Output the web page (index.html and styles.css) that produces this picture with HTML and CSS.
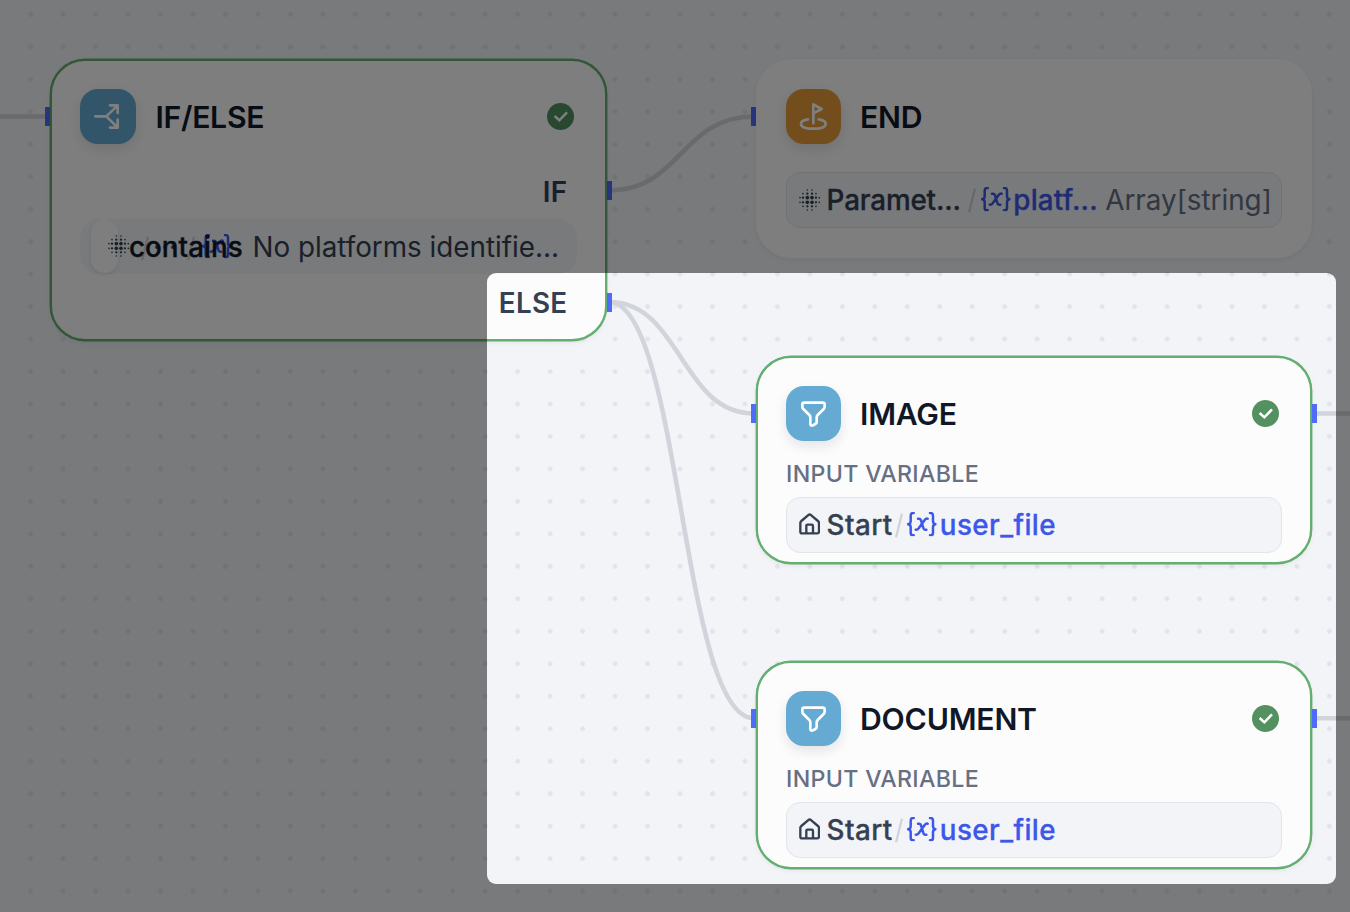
FILE: index.html
```
<!DOCTYPE html>
<html lang="en">
<head>
<meta charset="utf-8">
<title>Workflow</title>
<link rel="stylesheet" href="styles.css">
</head>
<body>
<svg class="defs" aria-hidden="true">
  <symbol id="check" viewBox="0 0 81 81"><circle cx="40.5" cy="40.5" r="40.5" fill="#539160"/><path d="M23 39 37 52 60 28" fill="none" stroke="#fff" stroke-width="7.500"/></symbol>
  <symbol id="filter" viewBox="0 0 165 165"><path d="M54 50H110q6 0 6 6v6q0 4-3 7L95 87q-3 3-3 7v14q0 4-4 6l-7 4q-8 3-8-5V95q0-5-3-8L52 69q-3-3-3-7v-6q0-6 5-6z"/></symbol>
  <symbol id="home" viewBox="0 0 64 66"><path d="M4 30q0-4 3-6L28 6q4-3 8 0L57 24q3 2 3 6V56q0 5-5 5H9q-5 0-5-5zM22 60V39q0-4 4-4H38q4 0 4 4V60"/></symbol>
  <symbol id="var" viewBox="0 0 89 73"><path d="M20 3h-2q-7 0-7 8v16q0 9-8 9.500q8 .5 8 9.500v16q0 8 7 8h2M69 3h2q7 0 7 8v16q0 9 8 9.500q-8 .5-8 9.500v16q0 8-7 8h-2M33 20h3q4 0 6 5l7 23q1 5 5 5h4M62 20q-5-1-9 4L35 49q-4 5-9 4"/></symbol>
  <symbol id="slash" viewBox="0 0 24 76"><path d="M21 2 3 74"/></symbol>
  <symbol id="dots" viewBox="0 0 64 66">
    <g><circle cx="25" cy="3" r="2.500"/><circle cx="39" cy="3" r="2.500"/>
    <circle cx="12" cy="14" r="2.500"/><circle cx="25" cy="14" r="3.500"/><circle cx="39" cy="14" r="3.500"/><circle cx="51" cy="14" r="2.500"/>
    <circle cx="3" cy="26" r="2.500"/><circle cx="12" cy="26" r="3.500"/><circle cx="25" cy="26" r="5.500"/><circle cx="39" cy="26" r="5.500"/><circle cx="51" cy="26" r="3.500"/><circle cx="61" cy="26" r="2.500"/>
    <circle cx="3" cy="40" r="2.500"/><circle cx="12" cy="40" r="3.500"/><circle cx="25" cy="40" r="5.500"/><circle cx="39" cy="40" r="5.500"/><circle cx="51" cy="40" r="3.500"/><circle cx="61" cy="40" r="2.500"/>
    <circle cx="12" cy="52" r="2.500"/><circle cx="25" cy="52" r="3.500"/><circle cx="39" cy="52" r="3.500"/><circle cx="51" cy="52" r="2.500"/>
    <circle cx="25" cy="63" r="2.500"/><circle cx="39" cy="63" r="2.500"/></g>
  </symbol>
</svg>

<main class="canvas">
  <svg class="edges" viewBox="0 0 1350 912">
    <path d="M0 116.500H48M609 190.500C681 190.500 681 116.500 754 116.500M609 302C681 302 681 413.500 754 413.500M609 302C681 302 681 718.300 754 718.300M1314 413.500H1350M1314 718.300H1350"/>
  </svg>

  <section class="node node-if done">
    <i class="port in"></i><i class="port out port-if"></i><i class="port out port-else"></i>
    <header class="head">
      <span class="tile blue"><svg viewBox="0 0 165 165"><path d="M46 82H79L113 49M79 82 113 116M90 49H113V72M90 116H113V92"/></svg></span>
      <h2>IF/ELSE</h2>
      <svg class="check"><use href="#check"/></svg>
    </header>
    <div class="branch">IF</div>
    <div class="condition">
      <span class="chip"></span>
      <svg class="dots c-dots"><use href="#dots"/></svg>
      <svg class="slash c-slash1"><use href="#slash"/></svg>
      <span class="c-more">...</span>
      <svg class="slash c-slash2"><use href="#slash"/></svg>
      <svg class="var c-var"><use href="#var"/></svg>
      <b class="operator">contains</b>
      <span class="value">No platforms identifie...</span>
    </div>
    <div class="branch else">ELSE</div>
  </section>

  <section class="node node-end">
    <i class="port in"></i>
    <header class="head">
      <span class="tile orange"><svg viewBox="0 0 165 165"><path d="M82 103V46L107 60 82 73M66 91Q45 94 45 104Q45 119 82 119T119 104Q119 94 98 91"/></svg></span>
      <h2>END</h2>
    </header>
    <div class="field">
      <svg class="dots"><use href="#dots"/></svg><span class="source w-param">Paramet...</span>
      <svg class="slash"><use href="#slash"/></svg><svg class="var"><use href="#var"/></svg>
      <span class="name w-plat">platf...</span><span class="type">Array[string]</span>
    </div>
  </section>

  <section class="node node-image done">
    <i class="port in"></i><i class="port out"></i>
    <header class="head">
      <span class="tile blue"><svg><use href="#filter"/></svg></span>
      <h2>IMAGE</h2>
      <svg class="check"><use href="#check"/></svg>
    </header>
    <div class="label">INPUT VARIABLE</div>
    <div class="field">
      <svg class="home"><use href="#home"/></svg><span class="source w-start">Start</span>
      <svg class="slash"><use href="#slash"/></svg><svg class="var"><use href="#var"/></svg>
      <span class="name">user_file</span>
    </div>
  </section>

  <section class="node node-document done">
    <i class="port in"></i><i class="port out"></i>
    <header class="head">
      <span class="tile blue"><svg><use href="#filter"/></svg></span>
      <h2>DOCUMENT</h2>
      <svg class="check"><use href="#check"/></svg>
    </header>
    <div class="label">INPUT VARIABLE</div>
    <div class="field">
      <svg class="home"><use href="#home"/></svg><span class="source w-start">Start</span>
      <svg class="slash"><use href="#slash"/></svg><svg class="var"><use href="#var"/></svg>
      <span class="name">user_file</span>
    </div>
  </section>

  <div class="spotlight"></div>
</main>
</body>
</html>
```
FILE: styles.css
```
* { box-sizing: border-box; }
body { margin: 0; font-family: Inter, "Liberation Sans", sans-serif; }
.defs { position: absolute; width: 0; height: 0; }
svg { display: block; flex: none; }

.canvas {
  position: relative;
  width: 1350px;
  height: 912px;
  overflow: hidden;
  background-color: #f2f4f8;
  background-image: radial-gradient(circle, #e3e4eb 2px, rgba(227, 228, 235, 0) 2.8px);
  background-size: 32.48px 32.48px;
  background-position: 14.4px 30.6px;
}
.edges { position: absolute; inset: 0; width: 1350px; height: 912px; }
.edges path { fill: none; stroke: #d2d4dc; stroke-width: 4.600; }

.node {
  position: absolute;
  width: 556px;
  padding: 28px 28px 0;
  border: 2px solid #fcfcfd;
  border-radius: 35px;
  background: #fcfcfd;
  box-shadow: 0 2px 5px rgba(16, 24, 40, .06);
}
.node.done { border-color: #64ae70; box-shadow: 0 0 0 .4px #64ae70, 0 2px 5px rgba(16, 24, 40, .06); }
.node-if { left: 50px; top: 58.600px; width: 557px; height: 282.600px; }
.node-end { left: 756px; top: 58.600px; height: 199.600px; }
.node-image { left: 756px; top: 355.700px; height: 208.500px; }
.node-document { left: 756px; top: 660.500px; height: 208.500px; }

.port { position: absolute; top: 46.500px; width: 5px; height: 19px; background: #4e6bfa; }
.port.in { left: -7px; }
.port.out { right: -7px; }
.port.port-if { top: 120.500px; }
.port.port-else { top: 232px; }

.head { display: flex; align-items: center; height: 56px; }
.head h2 { margin: 0 0 0 19px; font-size: 30.200px; line-height: 36px; font-weight: 600; letter-spacing: -.2px; color: #101828; }
.node-if h2 { margin-left: 19.500px; letter-spacing: -.3px; }
.tile { width: 55px; height: 55px; border-radius: 18px; box-shadow: 0 5px 12px rgba(16, 24, 40, .1); }
.tile svg { width: 55px; height: 55px; fill: none; stroke: #fff; stroke-width: 8; stroke-linecap: round; stroke-linejoin: round; }
.node-if .tile { width: 56px; }
.blue { background: #65aad2; }
.orange { background: #e69b38; }
.check { width: 27px; height: 27px; margin-left: auto; margin-right: 3px; }

.branch { height: 47px; margin-top: 24px; padding-right: 9.500px; text-align: right; font-size: 27.800px; line-height: 47px; font-weight: 600; letter-spacing: .3px; color: #354052; }
.branch.else { margin-top: 6px; }

.condition { position: relative; display: flex; align-items: center; height: 55px; margin-top: 3px; border-radius: 19px; background: #f2f4f7; font-size: 27.800px; color: #354052; }
.value { margin-left: 172.500px; padding-top: 1px; letter-spacing: 0; white-space: nowrap; }
.chip { position: absolute; left: 11px; top: 0; width: 27px; height: 54px; border-radius: 14px; background: #fcfcfd; box-shadow: 0 2px 4px rgba(16, 24, 40, .08); }
.operator { position: absolute; left: 49px; top: 11px; line-height: 34px; font-weight: 500; -webkit-text-stroke: .35px; color: #101828; }
.c-dots { position: absolute; left: 28px; top: 18px; }
.condition .c-slash1 { position: absolute; left: 61px; top: 17px; margin: 0; }
.condition .c-slash2 { position: absolute; left: 107px; top: 17px; margin: 0; }
.c-more { position: absolute; left: 73px; top: 3px; line-height: 34px; }
.condition .c-var { position: absolute; left: 117px; top: 17px; }

.label { height: 28px; margin-top: 18px; font-size: 23.200px; line-height: 28px; font-weight: 500; letter-spacing: .32px; color: #676f83; }
.field { display: flex; align-items: center; width: 496px; height: 55.500px; margin-top: 9.500px; padding: 1px 12px 0; border: 1px solid #e3e5ea; border-radius: 14px; background: #f2f4f8; font-size: 27.800px; line-height: 34px; white-space: nowrap; }
.field > * { flex: none; }
.node-end .field { margin-top: 27.500px; }
.dots, .home { width: 21.300px; height: 22px; margin: -1.500px 0 0; }
.dots { fill: #354052; }
.home { margin-top: -2px; fill: none; stroke: #354052; stroke-width: 7; stroke-linejoin: round; }
.source { margin-left: 6.300px; font-weight: 500; -webkit-text-stroke: .3px; color: #354052; }
.w-start { width: 67px; letter-spacing: .4px; }
.w-param { width: 140.500px; letter-spacing: -.15px; }
.slash { width: 8px; height: 25px; margin-left: 1px; fill: none; stroke: #d0d3d9; stroke-width: 7; }
.var { width: 29.700px; height: 24.300px; margin: -2px 0 0 4.500px; fill: none; stroke: #3d58e8; stroke-width: 7.500; stroke-linecap: round; stroke-linejoin: round; overflow: visible; }
.name { margin-left: 3px; font-weight: 500; -webkit-text-stroke: .3px; letter-spacing: .4px; color: #3d58e8; }
.w-plat { width: 86px; letter-spacing: .2px; }
.type { margin-left: 6px; color: #676f83; }

.spotlight { position: absolute; left: 486.700px; top: 273px; width: 849.300px; height: 610.500px; border-radius: 9px; box-shadow: 0 0 0 1400px rgba(0, 0, 0, .5); }
```
